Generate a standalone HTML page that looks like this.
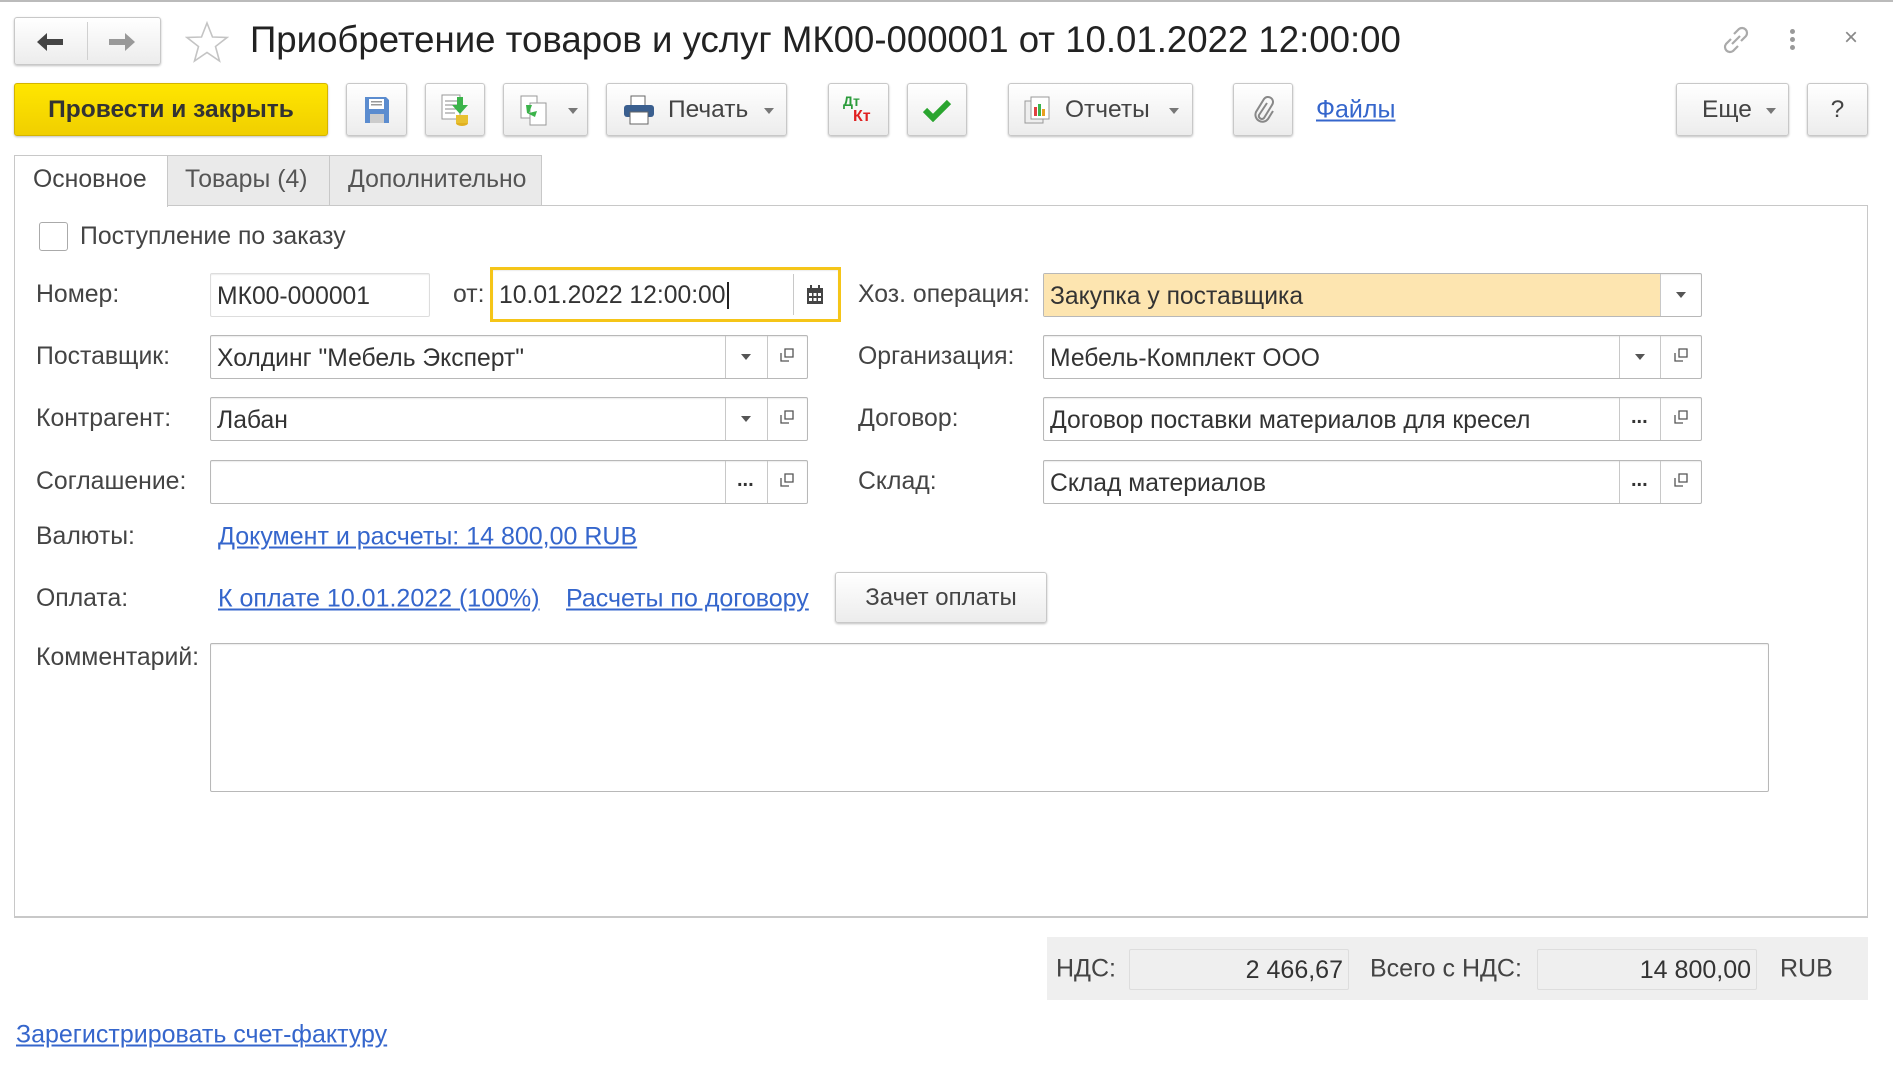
<!DOCTYPE html>
<html><head><meta charset="utf-8">
<style>
*{box-sizing:border-box;margin:0;padding:0}
body{width:1893px;height:1069px;background:#fff;position:relative;overflow:hidden;font-family:"Liberation Sans",sans-serif;color:#333;font-size:24px}
.a{position:absolute}
.btn{position:absolute;border:1px solid #c8c8c8;border-radius:3px;background:linear-gradient(#fff,#ececec);box-shadow:0 1px 2px rgba(0,0,0,.25);display:flex;align-items:center;justify-content:center;color:#444;font-size:24.5px}
.fld{position:absolute;border:1px solid #b8b8b8;border-radius:2px;background:#fff;height:44px;box-shadow:inset 0 1px 1px rgba(0,0,0,.08)}
.fld .t{position:absolute;left:6px;top:9px;font-size:24.7px;color:#333;white-space:nowrap}
.dv{position:absolute;top:0;bottom:0;border-left:1px solid #c8c8c8}
.lbl{position:absolute;font-size:24.8px;color:#444;white-space:nowrap;transform:translateY(-50%)}
.lnk{position:absolute;font-size:25px;color:#3566cc;text-decoration:underline;white-space:nowrap;transform:translateY(-50%)}
.tri{position:absolute;width:0;height:0;border-left:5px solid transparent;border-right:5px solid transparent;border-top:6px solid #555}
.cp{position:absolute;width:14px;height:14px}
.dots{position:absolute;font-size:20px;color:#333;font-weight:bold}
</style></head><body>
<div class="a" style="left:0;top:0;width:1893px;height:2px;background:#bbb"></div>

<div class="btn" style="left:14px;top:17px;width:147px;height:48px">
 <div class="a" style="left:72px;top:4px;bottom:4px;border-left:1px solid #d0d0d0"></div>
 <svg class="a" style="left:20px;top:12px" width="30" height="24" viewBox="0 0 30 24"><path d="M2 12 L12 3 V9 H28 V15 H12 V21 Z" fill="#444"/></svg>
 <svg class="a" style="left:92px;top:12px" width="30" height="24" viewBox="0 0 30 24"><path d="M28 12 L18 3 V9 H2 V15 H18 V21 Z" fill="#999"/></svg>
</div>
<svg class="a" style="left:185px;top:21px" width="44" height="42" viewBox="0 0 44 42"><path d="M22 2 L27.5 16 L42 16.5 L30.5 25.5 L34.5 40 L22 31.5 L9.5 40 L13.5 25.5 L2 16.5 L16.5 16 Z" fill="none" stroke="#c4c4c4" stroke-width="1.6"/></svg>
<div class="a" style="left:250px;top:19px;font-size:36.6px;color:#222;white-space:nowrap">Приобретение товаров и услуг МК00-000001 от 10.01.2022 12:00:00</div>
<svg class="a" style="left:1720px;top:24px" width="32" height="32" viewBox="0 0 32 32"><g fill="none" stroke="#aaa" stroke-width="2.2"><path d="M14 10 l5-5 a5 5 0 0 1 7 7 l-5 5"/><path d="M18 22 l-5 5 a5 5 0 0 1 -7 -7 l5 -5"/><path d="M12 20 L20 12"/></g></svg>
<div class="a" style="left:1790px;top:29px;width:5px;height:5px;background:#999;border-radius:50%;box-shadow:0 8px 0 #999,0 16px 0 #999"></div>
<div class="a" style="left:1844px;top:24px;font-size:24px;color:#888">×</div>

<div class="btn" style="left:14px;top:83px;width:314px;height:53px;background:linear-gradient(#ffe600,#f0cf00);border-color:#d4b400;color:#333;font-weight:bold;font-size:24.5px">Провести и закрыть</div>
<div class="btn" style="left:346px;top:83px;width:61px;height:53px"><svg width="28" height="30" viewBox="0 0 28 30"><path d="M2 2 H23 L26 5 V28 H2Z" fill="#5b8ccf"/><rect x="6" y="4" width="15" height="10" fill="#fff"/><rect x="8" y="6" width="11" height="1.5" fill="#999"/><rect x="8" y="9" width="11" height="1.5" fill="#999"/><rect x="7" y="19" width="14" height="9" fill="#ccc"/></svg></div>
<div class="btn" style="left:425px;top:83px;width:60px;height:53px"><svg width="32" height="34" viewBox="0 0 32 34"><rect x="3" y="2" width="18" height="24" fill="#fff" stroke="#999"/><path d="M6 8h12M6 12h12M6 16h12M6 20h10" stroke="#888"/><ellipse cx="23" cy="30" rx="6" ry="3" fill="#e0b020"/><rect x="17" y="22" width="12" height="8" fill="#e8c030"/><path d="M18 4 h6 v8 h5 l-8 9 l-8 -9 h5z" fill="#3bb34a"/></svg></div>
<div class="btn" style="left:503px;top:83px;width:85px;height:53px;justify-content:flex-start;padding-left:14px"><svg width="32" height="34" viewBox="0 0 32 34"><rect x="3" y="3" width="16" height="22" fill="#fff" stroke="#999"/><rect x="12" y="10" width="16" height="22" fill="#fff" stroke="#999"/><path d="M8 12 l6 0 l-3 8 l8 -2 l-2 6 l-8 -4 z" fill="#3bb34a"/></svg><div class="tri" style="left:64px;top:24px;border-top-color:#777"></div></div>
<div class="btn" style="left:606px;top:83px;width:181px;height:53px;justify-content:flex-start;padding-left:15px"><svg width="34" height="30" viewBox="0 0 34 30"><rect x="9" y="1" width="14" height="10" fill="#fff" stroke="#666"/><rect x="2" y="10" width="30" height="12" rx="3" fill="#3a5f8f"/><rect x="8" y="17" width="18" height="12" fill="#fff" stroke="#666"/></svg><span style="margin-left:12px">Печать</span><div class="tri" style="left:157px;top:24px;border-top-color:#777"></div></div>
<div class="btn" style="left:828px;top:83px;width:61px;height:53px"><div class="a" style="left:14px;top:9px;font-size:14px;font-weight:bold;color:#2a9b3a">Дт</div><div class="a" style="left:24px;top:24px;font-size:16px;font-weight:bold;color:#e02020">Кт</div></div>
<div class="btn" style="left:907px;top:83px;width:60px;height:53px"><svg width="30" height="24" viewBox="0 0 30 24"><path d="M3 12 l8 8 l16 -16" fill="none" stroke="#2aa52f" stroke-width="6"/></svg></div>
<div class="btn" style="left:1008px;top:83px;width:185px;height:53px;justify-content:flex-start;padding-left:14px"><svg width="30" height="30" viewBox="0 0 30 30"><rect x="2" y="6" width="18" height="22" fill="#eee" stroke="#999"/><rect x="8" y="2" width="18" height="22" fill="#fff" stroke="#999"/><rect x="11" y="12" width="3" height="9" fill="#e04040"/><rect x="15" y="9" width="3" height="12" fill="#3bb34a"/><rect x="19" y="14" width="3" height="7" fill="#e8a020"/></svg><span style="margin-left:12px">Отчеты</span><div class="tri" style="left:160px;top:24px;border-top-color:#777"></div></div>
<div class="btn" style="left:1233px;top:83px;width:60px;height:53px"><svg width="24" height="30" viewBox="0 0 24 30"><path d="M16 8 L8 20 a3 3 0 0 0 5 3 L21 10 a5 5 0 0 0 -8 -6 L5 17 a7 7 0 0 0 12 7 l5 -8" fill="none" stroke="#888" stroke-width="2"/></svg></div>
<div class="lnk" style="left:1316px;top:110px;font-size:25px">Файлы</div>
<div class="btn" style="left:1676px;top:83px;width:113px;height:53px;justify-content:flex-start;padding-left:25px">Еще<div class="tri" style="left:89px;top:24px;border-top-color:#777"></div></div>
<div class="btn" style="left:1807px;top:83px;width:61px;height:53px">?</div>

<div class="a" style="left:14px;top:205px;width:1854px;height:713px;border:1px solid #c8c8c8;border-bottom:2px solid #c8c8c8"></div>
<div class="a" style="left:167px;top:155px;width:163px;height:51px;background:#eaeaea;border:1px solid #c8c8c8"></div>
<div class="a" style="left:329px;top:155px;width:213px;height:51px;background:#eaeaea;border:1px solid #c8c8c8"></div>
<div class="a" style="left:14px;top:155px;width:154px;height:52px;background:#fff;border:1px solid #c8c8c8;border-bottom:none"></div>
<div class="lbl" style="left:33px;top:180px;font-size:24.8px;color:#444">Основное</div>
<div class="lbl" style="left:185px;top:180px;font-size:24.8px;color:#555">Товары (4)</div>
<div class="lbl" style="left:348px;top:180px;font-size:24.8px;color:#555">Дополнительно</div>

<div class="a" style="left:39px;top:222px;width:29px;height:29px;border:1px solid #aaa;border-radius:3px;background:#fff"></div>
<div class="lbl" style="left:80px;top:237px">Поступление по заказу</div>

<div class="lbl" style="left:36px;top:295px">Номер:</div>
<div class="fld" style="left:210px;top:273px;width:220px;border-color:#ddd"><div class="t">МК00-000001</div></div>
<div class="lbl" style="left:453px;top:295px">от:</div>
<div class="fld" style="left:490px;top:267px;width:351px;height:55px;border:3px solid #f5c518;border-radius:0"><div class="t" style="top:12px">10.01.2022 12:00:00<span style="border-left:2px solid #222;margin-left:1px"></span></div><div class="dv" style="left:300px;top:4px;bottom:4px"></div>
<svg class="a" style="left:313px;top:15px" width="18" height="20" viewBox="0 0 18 20"><rect x="1" y="3" width="16" height="16" fill="#444"/><rect x="4" y="0" width="2" height="5" fill="#444"/><rect x="12" y="0" width="2" height="5" fill="#444"/><g fill="#fff"><rect x="3" y="8" width="3" height="3"/><rect x="7.5" y="8" width="3" height="3"/><rect x="12" y="8" width="3" height="3"/><rect x="3" y="13" width="3" height="3"/><rect x="7.5" y="13" width="3" height="3"/><rect x="12" y="13" width="3" height="3"/></g></svg></div>

<div class="lbl" style="left:36px;top:357px">Поставщик:</div>
<div class="fld" style="left:210px;top:335px;width:598px"><div class="t">Холдинг "Мебель Эксперт"</div><div class="dv" style="left:514px"></div><div class="dv" style="left:556px"></div><div class="tri" style="left:530px;top:18px"></div><svg class="cp" style="left:569px;top:12px" viewBox="0 0 14 14"><path d="M5 1h8v8H5zM1 5v8h8" fill="none" stroke="#555" stroke-width="1.3"/></svg></div>
<div class="lbl" style="left:36px;top:419px">Контрагент:</div>
<div class="fld" style="left:210px;top:397px;width:598px"><div class="t">Лабан</div><div class="dv" style="left:514px"></div><div class="dv" style="left:556px"></div><div class="tri" style="left:530px;top:18px"></div><svg class="cp" style="left:569px;top:12px" viewBox="0 0 14 14"><path d="M5 1h8v8H5zM1 5v8h8" fill="none" stroke="#555" stroke-width="1.3"/></svg></div>
<div class="lbl" style="left:36px;top:482px">Соглашение:</div>
<div class="fld" style="left:210px;top:460px;width:598px"><div class="dv" style="left:514px"></div><div class="dv" style="left:556px"></div><div class="dots" style="left:526px;top:8px">...</div><svg class="cp" style="left:569px;top:12px" viewBox="0 0 14 14"><path d="M5 1h8v8H5zM1 5v8h8" fill="none" stroke="#555" stroke-width="1.3"/></svg></div>

<div class="lbl" style="left:858px;top:295px">Хоз. операция:</div>
<div class="fld" style="left:1043px;top:273px;width:659px"><div class="a" style="left:0;top:0;bottom:0;width:616px;background:#fde5b0"></div><div class="t">Закупка у поставщика</div><div class="dv" style="left:616px"></div><div class="tri" style="left:632px;top:18px"></div></div>
<div class="lbl" style="left:858px;top:357px">Организация:</div>
<div class="fld" style="left:1043px;top:335px;width:659px"><div class="t">Мебель-Комплект ООО</div><div class="dv" style="left:575px"></div><div class="dv" style="left:616px"></div><div class="tri" style="left:591px;top:18px"></div><svg class="cp" style="left:630px;top:12px" viewBox="0 0 14 14"><path d="M5 1h8v8H5zM1 5v8h8" fill="none" stroke="#555" stroke-width="1.3"/></svg></div>
<div class="lbl" style="left:858px;top:419px">Договор:</div>
<div class="fld" style="left:1043px;top:397px;width:659px"><div class="t">Договор поставки материалов для кресел</div><div class="dv" style="left:575px"></div><div class="dv" style="left:616px"></div><div class="dots" style="left:587px;top:8px">...</div><svg class="cp" style="left:630px;top:12px" viewBox="0 0 14 14"><path d="M5 1h8v8H5zM1 5v8h8" fill="none" stroke="#555" stroke-width="1.3"/></svg></div>
<div class="lbl" style="left:858px;top:482px">Склад:</div>
<div class="fld" style="left:1043px;top:460px;width:659px"><div class="t">Склад материалов</div><div class="dv" style="left:575px"></div><div class="dv" style="left:616px"></div><div class="dots" style="left:587px;top:8px">...</div><svg class="cp" style="left:630px;top:12px" viewBox="0 0 14 14"><path d="M5 1h8v8H5zM1 5v8h8" fill="none" stroke="#555" stroke-width="1.3"/></svg></div>

<div class="lbl" style="left:36px;top:537px">Валюты:</div>
<div class="lnk" style="left:218px;top:537px">Документ и расчеты: 14 800,00 RUB</div>
<div class="lbl" style="left:36px;top:599px">Оплата:</div>
<div class="lnk" style="left:218px;top:599px">К оплате 10.01.2022 (100%)</div>
<div class="lnk" style="left:566px;top:599px">Расчеты по договору</div>
<div class="btn" style="left:835px;top:572px;width:212px;height:51px;font-size:24px">Зачет оплаты</div>
<div class="lbl" style="left:36px;top:658px">Комментарий:</div>
<div class="fld" style="left:210px;top:643px;width:1559px;height:149px"></div>

<div class="a" style="left:1047px;top:937px;width:821px;height:63px;background:#efefef"></div>
<div class="lbl" style="left:1056px;top:969px;font-size:25px">НДС:</div>
<div class="a" style="left:1129px;top:949px;width:220px;height:41px;border:1px solid #ddd;border-radius:2px;background:#efefef;text-align:right;padding:6px 5px;font-size:25px;color:#333">2 466,67</div>
<div class="lbl" style="left:1370px;top:969px;font-size:25px">Всего с НДС:</div>
<div class="a" style="left:1537px;top:949px;width:220px;height:41px;border:1px solid #ddd;border-radius:2px;background:#efefef;text-align:right;padding:6px 5px;font-size:25px;color:#333">14 800,00</div>
<div class="lbl" style="left:1780px;top:969px;font-size:25px">RUB</div>
<div class="lnk" style="left:16px;top:1035px">Зарегистрировать счет-фактуру</div>
</body></html>
